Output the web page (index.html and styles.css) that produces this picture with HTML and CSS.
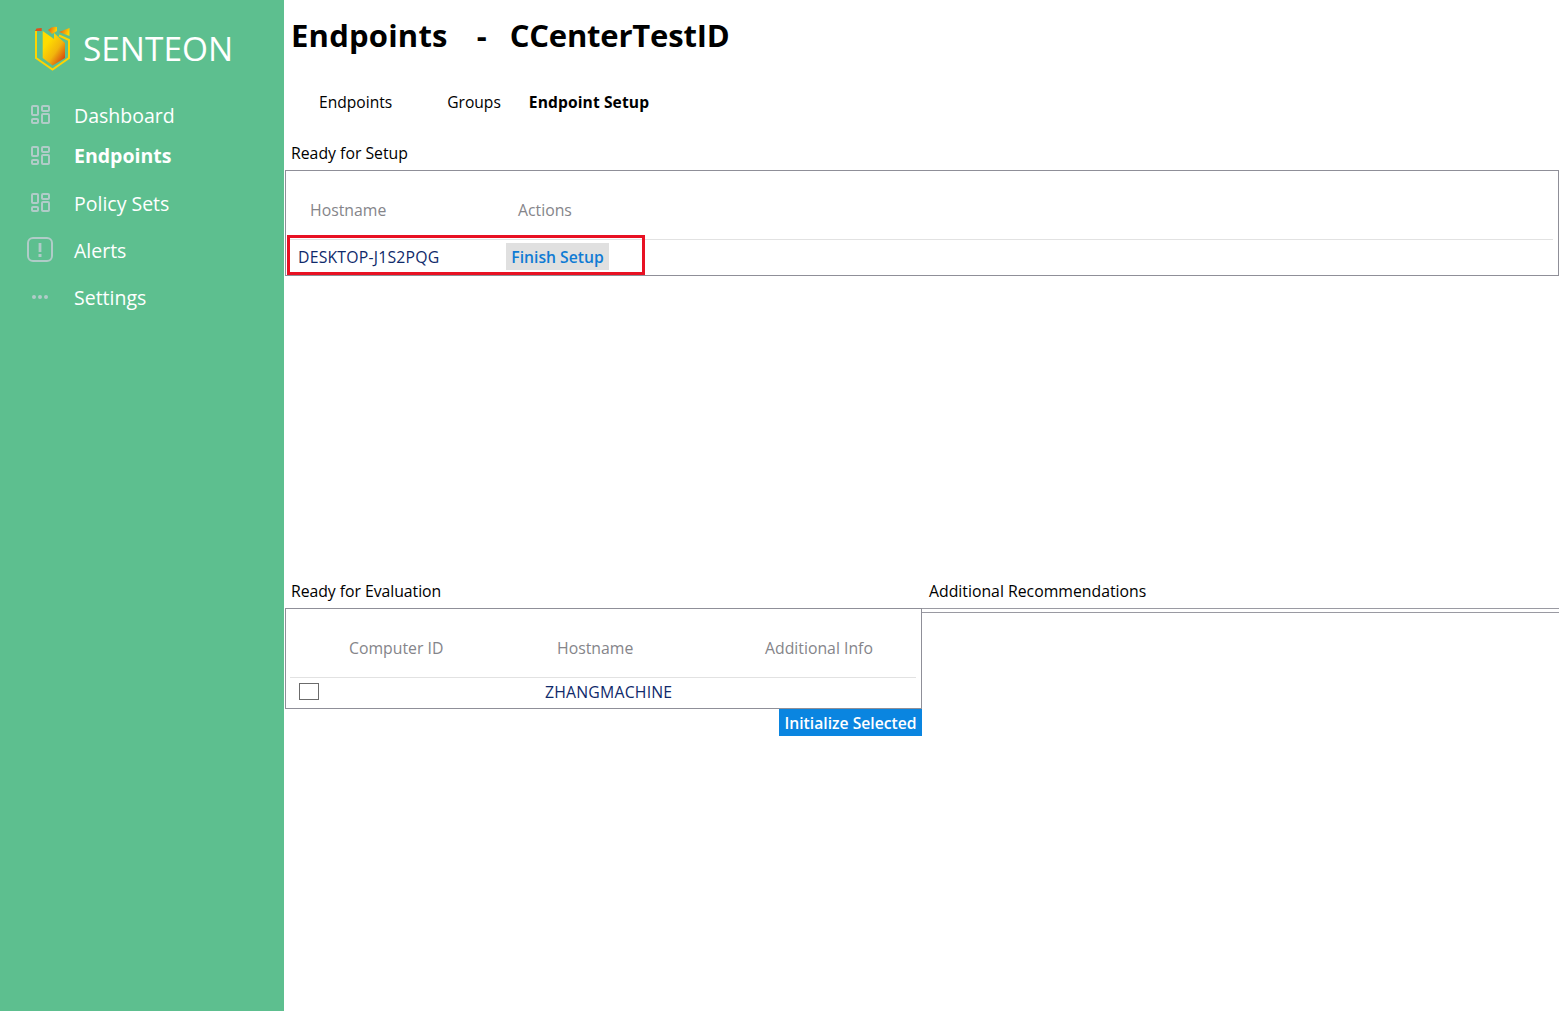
FILE: index.html
```html
<!DOCTYPE html>
<html lang="en">
<head>
    <meta charset="UTF-8">
    <meta name="viewport" content="width=device-width, initial-scale=1.0">
    <title>Endpoints</title>
    <link rel="stylesheet" href="styles.css">
</head>
<body>
    <aside class="sidebar">
        <div class="brand">
            <svg class="brand-logo" width="38" height="48" viewBox="0 0 38 48">
                <defs>
                    <linearGradient id="shieldFill" x1="0.25" y1="0.3" x2="0.85" y2="0.95">
                        <stop offset="0" stop-color="#ffdc00"/>
                        <stop offset="0.5" stop-color="#f2b50c"/>
                        <stop offset="1" stop-color="#d6420f"/>
                    </linearGradient>
                    <linearGradient id="capFill" x1="0" y1="0" x2="1" y2="0.3">
                        <stop offset="0" stop-color="#e0501a"/>
                        <stop offset="1" stop-color="#ffd400"/>
                    </linearGradient>
                </defs>
                <path d="M3 6 V33 L19.5 44.5 L36 33 V15 L26 10.5" fill="none" stroke="#ffd400" stroke-width="2"/>
                <path d="M2 6 L3.5 3.5 L8.7 3 V6 Z" fill="#e0501a"/>
                <path d="M9.7 6 L21 14 V8 L32 18 V33 L19.6 40.5 L9.7 33 Z" fill="url(#shieldFill)"/>
                <path d="M15 5 Q19 1 24 2 V6 L19 9 Z" fill="url(#capFill)"/>
                <path d="M26 7 L36.5 3 V11 Z" fill="url(#capFill)"/>
            </svg>
            <span class="brand-name">SENTEON</span>
        </div>
        <nav class="nav">
            <a class="nav-item nav-dashboard">
                <svg class="nav-icon" width="19" height="19" viewBox="0 0 19 19"><g fill="none" stroke="#b0ccc8" stroke-width="2"><rect x="1" y="1" width="6" height="9" rx="1"/><rect x="11" y="1" width="7" height="5" rx="1"/><rect x="1" y="14" width="6" height="4" rx="1"/><rect x="11" y="9" width="7" height="9" rx="1"/></g></svg>
                <span>Dashboard</span>
            </a>
            <a class="nav-item nav-endpoints active">
                <svg class="nav-icon" width="19" height="19" viewBox="0 0 19 19"><g fill="none" stroke="#b0ccc8" stroke-width="2"><rect x="1" y="1" width="6" height="9" rx="1"/><rect x="11" y="1" width="7" height="5" rx="1"/><rect x="1" y="14" width="6" height="4" rx="1"/><rect x="11" y="9" width="7" height="9" rx="1"/></g></svg>
                <span>Endpoints</span>
            </a>
            <a class="nav-item nav-policy">
                <svg class="nav-icon" width="19" height="19" viewBox="0 0 19 19"><g fill="none" stroke="#b0ccc8" stroke-width="2"><rect x="1" y="1" width="6" height="9" rx="1"/><rect x="11" y="1" width="7" height="5" rx="1"/><rect x="1" y="14" width="6" height="4" rx="1"/><rect x="11" y="9" width="7" height="9" rx="1"/></g></svg>
                <span>Policy Sets</span>
            </a>
            <a class="nav-item nav-alerts">
                <svg class="nav-icon" width="26" height="26" viewBox="0 0 26 26"><rect x="1" y="1" width="24" height="23" rx="5" fill="none" stroke="#b0ccc8" stroke-width="2"/><path d="M13 6 V15" stroke="#b0ccc8" stroke-width="2.8"/><rect x="11.5" y="17" width="3" height="3" fill="#b0ccc8"/></svg>
                <span>Alerts</span>
            </a>
            <a class="nav-item nav-settings">
                <svg class="nav-icon" width="18" height="6" viewBox="0 0 18 6"><circle cx="3" cy="3" r="2" fill="#b0ccc8"/><circle cx="9" cy="3" r="2" fill="#b0ccc8"/><circle cx="15" cy="3" r="2" fill="#b0ccc8"/></svg>
                <span>Settings</span>
            </a>
        </nav>
    </aside>

    <main class="content">
        <h1 class="page-title"><span class="title-main">Endpoints</span><span class="title-dash">-</span><span class="title-sub">CCenterTestID</span></h1>

        <div class="tabs">
            <a class="tab tab-endpoints">Endpoints</a>
            <a class="tab tab-groups">Groups</a>
            <a class="tab tab-active">Endpoint Setup</a>
        </div>

        <section class="setup">
            <div class="section-label">Ready for Setup</div>
            <div class="panel setup-panel">
                <div class="head-row setup-cols">
                    <span class="col-host">Hostname</span>
                    <span class="col-actions">Actions</span>
                </div>
                <div class="setup-row">
                    <span class="host-name">DESKTOP-J1S2PQG</span>
                    <button class="finish-btn">Finish Setup</button>
                </div>
                <div class="highlight"></div>
            </div>
        </section>

        <section class="evaluation">
            <div class="eval-left">
                <div class="section-label">Ready for Evaluation</div>
                <div class="panel eval-panel">
                    <div class="head-row eval-cols">
                        <span>Computer ID</span>
                        <span>Hostname</span>
                        <span>Additional Info</span>
                    </div>
                    <div class="eval-row">
                        <span class="check"></span>
                        <span class="host-name">ZHANGMACHINE</span>
                    </div>
                </div>
                <div class="eval-actions">
                    <button class="init-btn">Initialize Selected</button>
                </div>
            </div>
            <div class="eval-right">
                <div class="section-label">Additional Recommendations</div>
                <div class="empty-panel"></div>
            </div>
        </section>
    </main>
</body>
</html>
```

FILE: styles.css
```css
body {
    margin: 0;
    height: 1011px;
    display: flex;
    overflow: hidden;
    background-color: #fff;
    font-family: 'Open Sans', 'Noto Sans', sans-serif;
    color: #000;
}

.sidebar {
    width: 284px;
    flex-shrink: 0;
    background-color: #5dbf8f;
    color: #fff;
}
.brand {
    display: flex;
    align-items: center;
    height: 48px;
    padding: 25px 0 0 33px;
}
.brand-logo {
    flex-shrink: 0;
}
.brand-name {
    margin-left: 12px;
    padding-bottom: 2px;
    font-size: 33.4px;
}
.nav {
    display: flex;
    flex-direction: column;
    padding-top: 29px;
}
.nav-item {
    position: relative;
    height: 28px;
    line-height: 28px;
    padding-left: 74px;
    font-size: 19.5px;
}
.nav-icon {
    position: absolute;
    left: 31px;
    top: 3px;
}
.nav-endpoints {
    margin-top: 12px;
}
.nav-endpoints .nav-icon {
    top: 4px;
}
.nav-policy {
    margin-top: 20px;
}
.nav-alerts {
    margin-top: 19px;
}
.nav-alerts .nav-icon {
    left: 27px;
    top: 0;
}
.nav-settings {
    margin-top: 19px;
}
.nav-settings .nav-icon {
    left: 31px;
    top: 10px;
}
.active {
    font-weight: 700;
}

.content {
    flex: 1;
    min-width: 0;
}
.page-title {
    margin: 0;
    padding: 13px 0 0 7px;
    height: 45px;
    line-height: 44px;
    font-size: 31px;
    font-weight: 700;
    display: flex;
}
.title-main {
    letter-spacing: 0.2px;
}
.title-dash {
    margin: 0 23px 0 29px;
}
.title-sub {
    letter-spacing: -0.2px;
}
.tabs {
    display: flex;
    align-items: center;
    margin-top: 24px;
    height: 40px;
    padding-left: 35px;
    font-size: 15.6px;
}
.tab-groups {
    margin-left: 55px;
}
.tab-active {
    margin-left: 28px;
    font-weight: 700;
    letter-spacing: 0.1px;
}

.section-label {
    height: 24px;
    line-height: 24px;
    margin-bottom: 5px;
    padding-left: 7px;
    font-size: 15.8px;
}
.panel {
    position: relative;
    border: 1px solid #8f8f98;
    background-color: #fff;
    box-sizing: border-box;
}
.setup {
    margin-top: 19px;
}
.setup-panel {
    margin-left: 1px;
    height: 106px;
}
.head-row {
    display: flex;
    height: 69px;
    margin: 0 5px 0 4px;
    box-sizing: border-box;
    padding-top: 27px;
    line-height: 24px;
    border-bottom: 1px solid #e2e2e2;
    color: #85858a;
    font-size: 15.8px;
}
.setup-cols .col-host {
    width: 208px;
    padding-left: 20px;
    box-sizing: border-box;
}
.setup-cols .col-actions {
    padding-left: 20px;
}
.setup-row {
    display: flex;
    align-items: center;
    height: 33px;
    padding-left: 12px;
    font-size: 15.8px;
}
.host-name {
    color: #0f2a6b;
    letter-spacing: 0.2px;
}
.setup-row .host-name {
    width: 208px;
    flex-shrink: 0;
}
.finish-btn {
    width: 103px;
    height: 27px;
    padding: 0;
    border: none;
    background-color: #e0e0e0;
    color: #0f7bd4;
    font-family: inherit;
    font-size: 15.7px;
    font-weight: 600;
}
.highlight {
    position: absolute;
    left: 1px;
    top: 64px;
    width: 358px;
    height: 40px;
    box-sizing: border-box;
    border: 3px solid #e81123;
}

.evaluation {
    display: flex;
    margin-top: 303px;
}
.eval-left {
    width: 637px;
    margin-left: 1px;
    flex-shrink: 0;
}
.eval-left .section-label {
    padding-left: 6px;
    letter-spacing: -0.05px;
}
.eval-panel {
    height: 101px;
}
.eval-cols {
    padding-left: 59px;
}
.eval-cols span {
    width: 208px;
    flex-shrink: 0;
}
.eval-row {
    display: flex;
    align-items: center;
    height: 27px;
    padding-left: 13px;
    font-size: 15.8px;
}
.check {
    box-sizing: border-box;
    width: 20px;
    height: 17px;
    border: 1px solid #6b6b6b;
    margin-right: 226px;
    flex-shrink: 0;
}
.eval-actions {
    display: flex;
    justify-content: flex-end;
}
.init-btn {
    width: 143px;
    height: 27px;
    padding: 0;
    border: none;
    background-color: #0a85e0;
    color: #fff;
    font-family: inherit;
    font-size: 15.7px;
    font-weight: 600;
}
.eval-right {
    flex: 1;
}
.empty-panel {
    height: 5px;
    box-sizing: border-box;
    border-top: 1px solid #9a9aa2;
    border-bottom: 1px solid #9a9aa2;
}
```
